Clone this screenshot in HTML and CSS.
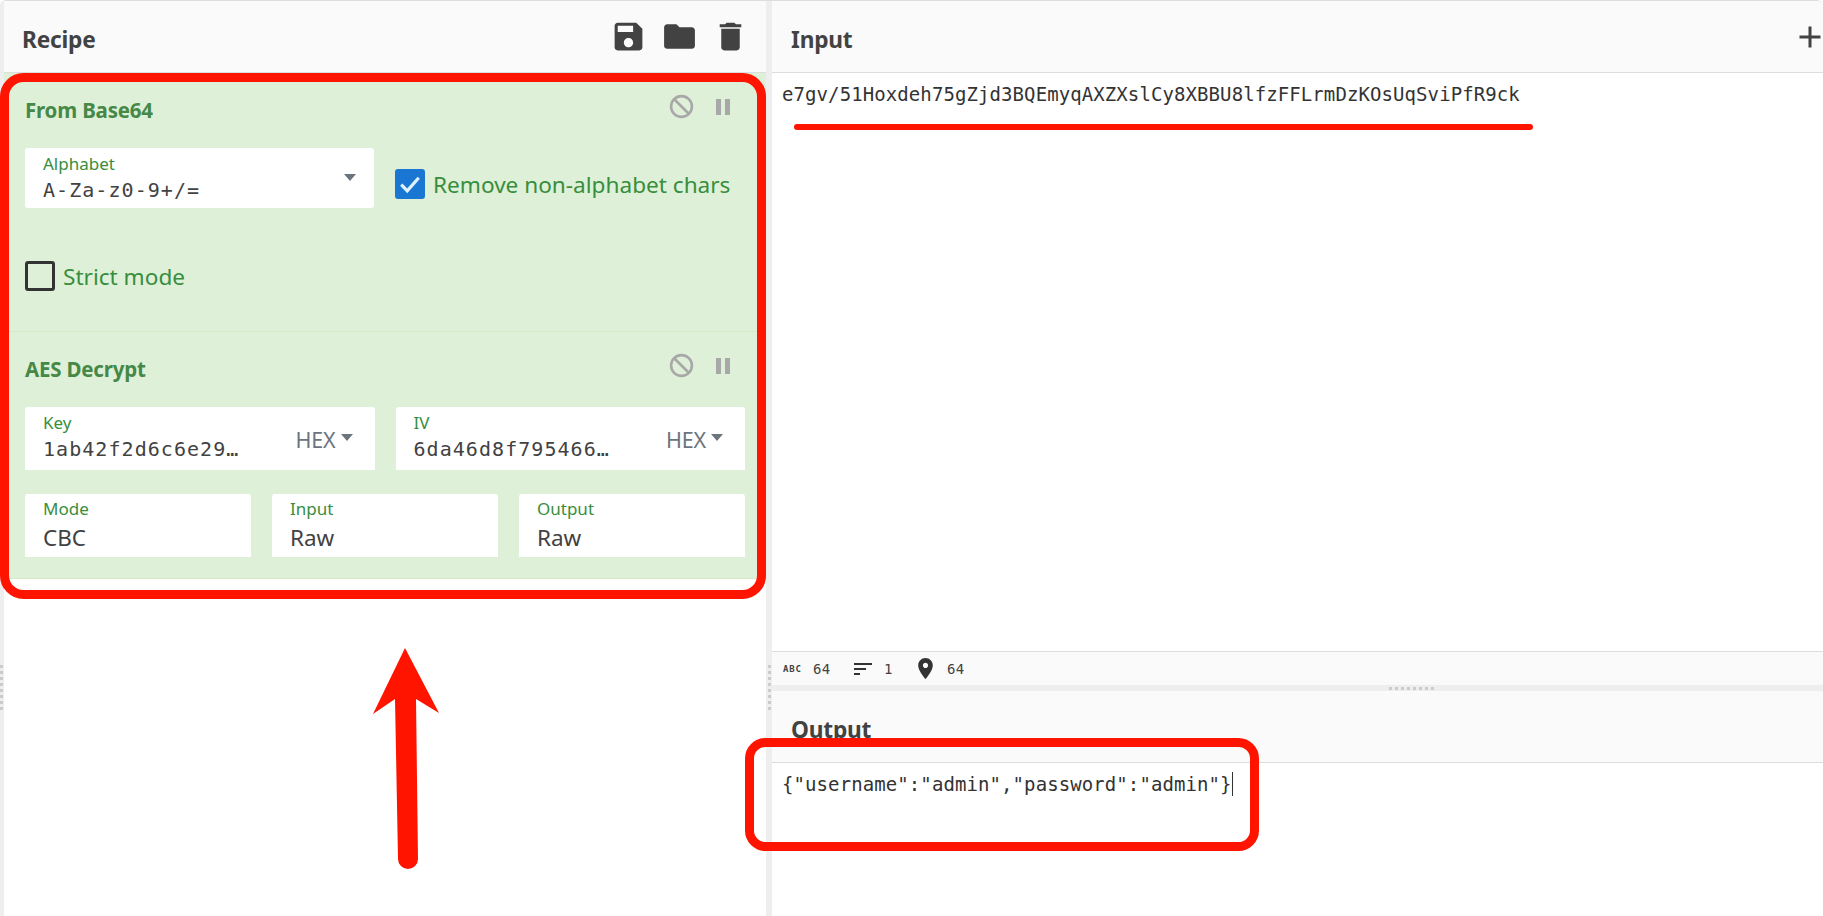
FILE: index.html
```html
<!DOCTYPE html>
<html lang="en">
<head>
<meta charset="utf-8">
<title>CyberChef</title>
<link rel="stylesheet" href="styles.css">
</head>
<body>
<div class="app">
  <div class="gutter gutter-left"><span class="dots"><i></i><i></i><i></i><i></i><i></i><i></i><i></i><i></i></span></div>
  <section class="recipe">
    <header class="panel-head recipe-head">
      <h2 class="panel-title">Recipe</h2>
      <div class="head-icons">
        <svg class="head-icon" viewBox="0 0 24 24"><path d="M17 3H5c-1.11 0-2 .9-2 2v14c0 1.1.89 2 2 2h14c1.1 0 2-.9 2-2V7l-4-4zm-5 16c-1.66 0-3-1.34-3-3s1.34-3 3-3 3 1.34 3 3-1.34 3-3 3zm3-10H5V5h10v4z"/></svg>
        <svg class="head-icon" viewBox="0 0 24 24"><path d="M10 4H4c-1.1 0-1.99.9-1.99 2L2 18c0 1.1.9 2 2 2h16c1.1 0 2-.9 2-2V8c0-1.1-.9-2-2-2h-8l-2-2z"/></svg>
        <svg class="head-icon" viewBox="0 0 24 24"><path d="M6 19c0 1.1.9 2 2 2h8c1.1 0 2-.9 2-2V7H6v12zM19 4h-3.5l-1-1h-5l-1 1H5v2h14V4z"/></svg>
      </div>
    </header>

    <article class="op op-first">
      <div class="op-head">
        <h3 class="op-title">From Base64</h3>
        <div class="op-icons">
          <svg class="ban" viewBox="0 0 24 24"><circle cx="12" cy="12" r="10" /><path d="M5 5l14 14"/></svg>
          <svg class="pause" viewBox="0 0 14 16"><path d="M0 0h5v16H0zM9 0h5v16H9z"/></svg>
        </div>
      </div>
      <div class="row row-alpha">
        <div class="field field-alpha">
          <label class="field-label">Alphabet</label>
          <div class="field-value mono">A-Za-z0-9+/=</div>
          <span class="caret caret-alpha"></span>
        </div>
        <label class="check check-on">
          <span class="box box-on"><svg viewBox="0 0 24 24"><path d="M5 12.5l4.8 5L19 7"/></svg></span>
          <span class="check-text">Remove non-alphabet chars</span>
        </label>
      </div>
      <label class="check check-strict">
        <span class="box"></span>
        <span class="check-text">Strict mode</span>
      </label>
    </article>

    <article class="op op-last">
      <div class="op-head">
        <h3 class="op-title">AES Decrypt</h3>
        <div class="op-icons">
          <svg class="ban" viewBox="0 0 24 24"><circle cx="12" cy="12" r="10" /><path d="M5 5l14 14"/></svg>
          <svg class="pause" viewBox="0 0 14 16"><path d="M0 0h5v16H0zM9 0h5v16H9z"/></svg>
        </div>
      </div>
      <div class="row row-two">
        <div class="field field-hex">
          <div class="field-main">
            <label class="field-label">Key</label>
            <div class="field-value mono">1ab42f2d6c6e29…</div>
          </div>
          <span class="hex">HEX<span class="caret"></span></span>
        </div>
        <div class="field field-hex">
          <div class="field-main">
            <label class="field-label">IV</label>
            <div class="field-value mono">6da46d8f795466…</div>
          </div>
          <span class="hex">HEX<span class="caret"></span></span>
        </div>
      </div>
      <div class="row row-three">
        <div class="field field-plain"><label class="field-label">Mode</label><div class="field-value sans">CBC</div></div>
        <div class="field field-plain"><label class="field-label">Input</label><div class="field-value sans">Raw</div></div>
        <div class="field field-plain"><label class="field-label">Output</label><div class="field-value sans">Raw</div></div>
      </div>
    </article>
  </section>

  <div class="gutter gutter-mid"><span class="dots"><i></i><i></i><i></i><i></i><i></i><i></i><i></i><i></i></span></div>

  <section class="io">
    <header class="panel-head io-head">
      <h2 class="panel-title">Input</h2>
      <svg class="add" viewBox="0 0 24 24"><path d="M19 13h-6v6h-2v-6H5v-2h6V5h2v6h6v2z"/></svg>
    </header>
    <div class="io-body input-body mono">e7gv/51Hoxdeh75gZjd3BQEmyqAXZXslCy8XBBU8lfzFFLrmDzKOsUqSviPfR9ck</div>
    <footer class="status">
      <span class="abc">ABC</span><span class="num num-a">64</span>
      <svg class="st-sort" viewBox="0 0 24 24"><path d="M3 18h6v-2H3v2zM3 6v2h18V6H3zm0 7h12v-2H3v2z"/></svg><span class="num num-b">1</span>
      <svg class="st-pin" viewBox="0 0 24 24"><path d="M12 2C8.13 2 5 5.13 5 9c0 5.25 7 13 7 13s7-7.75 7-13c0-3.87-3.13-7-7-7zm0 9.5c-1.38 0-2.5-1.12-2.5-2.5s1.12-2.5 2.5-2.5 2.5 1.12 2.5 2.5-1.12 2.5-2.5 2.5z"/></svg><span class="num num-c">64</span>
    </footer>
    <div class="h-gutter"><span class="h-dots"><i></i><i></i><i></i><i></i><i></i><i></i><i></i><i></i></span></div>
    <header class="panel-head io-head output-head">
      <h2 class="panel-title">Output</h2>
    </header>
    <div class="io-body output-body mono"><span class="cursor">{"username":"admin","password":"admin"}</span></div>
  </section>
</div>

<svg class="marks" viewBox="0 0 1823 916">
  <rect class="mark-box" x="4.5" y="77.5" width="757" height="517" rx="19"/>
  <rect class="mark-box" x="749.5" y="742.5" width="505" height="104" rx="16"/>
  <path class="mark-line" d="M797 127H1530"/>
  <path class="mark-arrow" d="M405 648L439 713 416 699 418 859A10 10 0 0 1 398 859L395 699 373 714z"/>
</svg>
</body>
</html>
```
FILE: styles.css
```css
* { box-sizing: border-box; }
html, body { margin: 0; padding: 0; height: 100%; background: #fff; overflow: hidden; }
body { position: relative; font-family: "Noto Sans", "Open Sans", sans-serif; color: #424242; }

.app { display: flex; width: 1823px; height: 916px; border-top: 1px solid #ddd; border-radius: 6px 6px 0 0; overflow: hidden; background: #fff; }

.gutter { flex: none; background: #eee; position: relative; display: flex; }
.gutter-left { width: 4px; }
.gutter-mid { width: 6px; }
.dots { display: flex; flex-direction: column; gap: 3px; margin-top: 664px; }
.gutter-left .dots { margin-left: 0; }
.gutter-mid .dots { margin-left: 2px; }
.dots i { display: block; width: 3px; height: 3px; background: #ccc; }

.recipe { flex: none; width: 762px; display: flex; flex-direction: column; }
.panel-head { display: flex; align-items: center; justify-content: space-between; height: 72px; background: #fafafa; border-bottom: 1px solid #ddd; padding-left: 18px; }
.recipe-head { padding-right: 17px; }
.panel-title { margin: 5px 0 0; font-family: "Noto Sans", sans-serif; font-size: 22.7px; font-weight: 700; color: #424242; letter-spacing: -0.2px; }
.head-icons { display: flex; gap: 14px; }
.head-icon { width: 37px; height: 37px; fill: #424242; display: block; }

.op { background: #dff0d8; padding-left: 21px; padding-right: 21px; border-bottom: 1px solid #d6e9c6; }
.op-first { height: 259px; padding-top: 13px; }
.op-last { height: 247px; padding-top: 13px; }
.op-head { display: flex; justify-content: space-between; height: 50px; margin-bottom: 12px; }
.op-title { margin: -2px 0 0; align-self: center; font-size: 20.5px; font-weight: 700; color: #468847; letter-spacing: -0.2px; }
.op-icons { display: flex; align-items: center; gap: 24px; height: 23px; margin-top: 9px; margin-right: 15px; }
.ban { width: 25px; height: 25px; margin: -1.5px; fill: none; stroke: #a8a8a8; stroke-width: 2.5; }
.pause { width: 14px; height: 16px; fill: #a8a8a8; }

.row { display: flex; }
.row-alpha { height: 60px; align-items: stretch; }
.row-two { gap: 21px; height: 63px; margin-bottom: 24px; }
.row-three { gap: 21px; height: 63px; }

.field { background: #fff; border-radius: 3px 3px 0 0; position: relative; }
.field-alpha { width: 349px; padding: 5px 18px 0; border-radius: 3px; }
.field-hex { width: 350px; display: flex; align-items: center; justify-content: space-between; padding: 0 22px 0 18px; }
.field-plain { width: 226px; padding: 4px 18px 0; }
.field-main { align-self: flex-start; padding-top: 5px; }
.field-label { display: block; font-size: 17px; line-height: 22px; color: #388e3c; }
.field-value { color: #424242; line-height: 26px; white-space: nowrap; }
.mono { font-family: "DejaVu Sans Mono", monospace; font-size: 19px; letter-spacing: 0.09px; }
.field-value.mono { font-size: 20px; letter-spacing: 1.05px; margin-top: 2px; }
.sans { font-size: 22.5px; margin-top: 5px; font-family: "Noto Sans", sans-serif; }

.caret { display: inline-block; width: 0; height: 0; border-left: 6px solid transparent; border-right: 6px solid transparent; border-top: 7px solid #6c757d; }
.caret-alpha { position: absolute; right: 18px; top: 26px; }
.hex { font-size: 21.5px; color: #6c757d; display: flex; align-items: center; gap: 5px; margin-top: 1px; letter-spacing: -0.2px; }
.hex .caret { margin-top: -4px; }

.check { display: flex; align-items: center; gap: 8px; color: #388e3c; }
.check-on { margin-left: 21px; height: 30px; margin-top: 21px; }
.check-strict { margin-top: 53px; height: 30px; gap: 8px; }
.check-text { font-size: 22.6px; line-height: 30px; white-space: nowrap; margin-top: 2px; }
.box { flex: none; width: 30px; height: 30px; border: 3px solid #333; border-radius: 3px; display: block; }
.box-on { background: #1976d2; border: 0; }
.box-on svg { display: block; width: 30px; height: 30px; fill: none; stroke: #dff0ff; stroke-width: 2.6; }

.io { flex: 1; min-width: 0; display: flex; flex-direction: column; }
.io-head { padding-left: 19px; padding-right: 0; flex: none; }
.add { width: 36px; height: 36px; fill: #424242; margin-right: -5px; }
.io-body { padding: 9px 10px; line-height: 24px; white-space: nowrap; color: #333; }
.input-body { height: 579px; flex: none; border-bottom: 1px solid #ddd; }
.output-head { height: 72px; align-items: flex-start; padding-top: 18px; }
.output-body { flex: 1; padding-top: 9px; }
.cursor { border-right: 1px solid #333; display: inline-block; line-height: 24px; }

.status { flex: none; height: 33px; background: #fafafa; display: flex; align-items: center; padding-left: 11px; font-family: "DejaVu Sans Mono", monospace; font-size: 14px; color: #424242; }
.abc { font-size: 9px; font-weight: 700; width: 30px; letter-spacing: 0.8px; }
.num { letter-spacing: 0.2px; }
.num-a { width: 38px; }
.st-sort { width: 24px; height: 24px; fill: #333; margin-right: 9px; flex: none; }
.num-b { width: 29px; }
.st-pin { width: 25px; height: 25px; fill: #333; margin-right: 9px; flex: none; }

.h-gutter { flex: none; height: 6px; background: #eee; display: flex; align-items: center; padding-left: 617px; }
.h-dots { display: flex; gap: 3px; }
.h-dots i { display: block; width: 3px; height: 3px; background: #ccc; }

.marks { position: absolute; left: 0; top: 0; width: 1823px; height: 916px; pointer-events: none; }
.mark-box { fill: none; stroke: #ff1400; stroke-width: 9; }
.mark-line { fill: none; stroke: #ff1400; stroke-width: 6; stroke-linecap: round; }
.mark-arrow { fill: #ff1400; }
```
